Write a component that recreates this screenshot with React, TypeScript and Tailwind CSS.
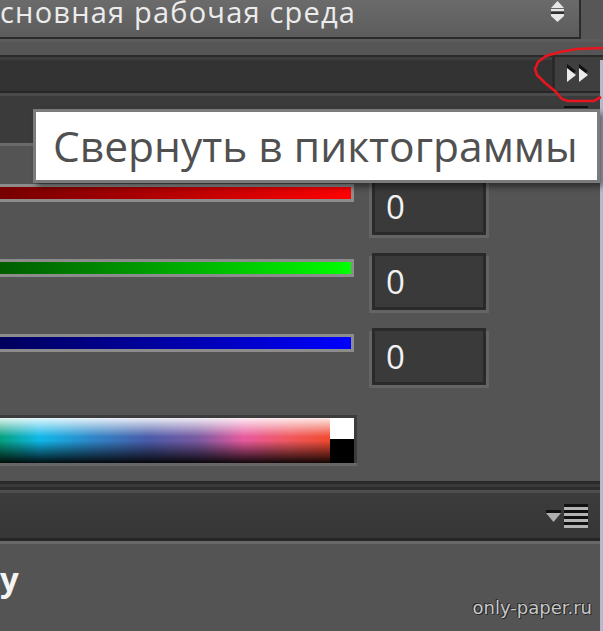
import React from "react"

const ui = { fontFamily: '"Open Sans", "Noto Sans", sans-serif' }

function Channel({ bar }: { bar: string }) {
  return (
    <div className="flex items-start">
      <div className={`mt-[6px] h-[18px] w-[354px] border-y-[3px] border-r-[3px] border-[#8c8c8c] ${bar}`} />
      <div className="ml-[18px] flex h-[57px] w-[114px] items-center border-[3px] border-[#2a2a2a] bg-[#3a3a3a] pl-[11px] shadow-[3px_3px_0_#646464,-3px_3px_0_#646464]">
        <span className="text-[33px] leading-none text-[#f2f2f2]">0</span>
      </div>
    </div>
  )
}

export default function App() {
  return (
    <div className="relative h-[631px] w-[603px] overflow-hidden bg-[#545454]" style={ui}>
      {/* workspace picker */}
      <div className="flex h-[39px]">
        <div className="flex w-[581px] items-start justify-between overflow-hidden border-r-[2px] border-b-[2px] border-[#2b2b2b] bg-gradient-to-b from-[#6b6b6b] to-[#5c5c5c]">
          <span className="-mt-[10px] whitespace-nowrap text-[29px] tracking-[1.2px] text-[#ececec]">сновная рабочая среда</span>
          <svg width="16" height="22" viewBox="0 0 16 22" className="mr-[13px]">
            <polygon points="1,8 7.5,1 14,8" fill="#e6e6e6" />
            <rect x="1" y="9" width="13" height="2" fill="#e6e6e6" />
            <rect x="1" y="12" width="13" height="2" fill="#2e2e2e" />
            <rect x="1" y="14" width="13" height="2" fill="#e6e6e6" />
            <polygon points="1,16 14,16 7.5,22" fill="#e6e6e6" />
          </svg>
        </div>
        <div className="flex-1 bg-[#575757]" />
      </div>
      <div className="h-[16px] border-t-[3px] border-[#5c5c5c] bg-[#555555]" />

      {/* panel header */}
      <div className="flex h-[38px] border-t-[2px] border-b-[2px] border-t-[#2a2a2a] border-b-[#262626] bg-[#333333] shadow-[inset_0_3px_0_#3e3e3e]">
        <div className="flex-1" />
        <div className="flex w-[51px] items-center border-l-[3px] border-[#2a2a2a] bg-[#3f3f3f] pl-[12px]">
          <svg width="22" height="20" viewBox="0 0 22 20">
            <polygon points="0,0 9,7 0,14" fill="#111111" />
            <polygon points="12,0 21,7 12,14" fill="#111111" />
            <polygon points="0,4 9,11 0,18" fill="#ececec" />
            <polygon points="12,4 21,11 12,18" fill="#ececec" />
          </svg>
        </div>
      </div>
      <div className="h-[3px] bg-[#4a4a4a]" />
      <div className="h-[47px] bg-[#3b3b3b]" />
      <div className="h-[3px] bg-[#6a6a6a]" />

      {/* colour sliders */}
      <div className="flex h-[335px] flex-col gap-[18px] pt-[32px]">
        <Channel bar="bg-gradient-to-r from-[#760000] to-[#ff0000]" />
        <Channel bar="bg-gradient-to-r from-[#005c00] to-[#00ff00]" />
        <Channel bar="bg-gradient-to-r from-[#00005c] to-[#0000ff]" />
        <div className="mt-[12px] flex h-[51px] w-[357px] flex-col">
          <div className="flex h-[48px] border-t-[3px] border-r-[3px] border-[#3c3c3c]">
            <div className="w-[330px] bg-[linear-gradient(to_bottom,rgba(255,255,255,0.88)_0%,rgba(255,255,255,0)_42%,rgba(0,0,0,0)_50%,rgba(0,0,0,0.92)_100%),linear-gradient(to_right,#06a07c_0%,#10b8ea_12%,#2f86c8_28%,#4a5ba8_45%,#7a5aa2_60%,#e85a9e_74%,#f0585c_88%,#f04a30_100%)]" />
            <div className="flex w-[24px] flex-col">
              <div className="h-[21px] bg-white" />
              <div className="flex-1 bg-black" />
            </div>
          </div>
          <div className="h-[3px] bg-[#666666]" />
        </div>
      </div>

      {/* next panel */}
      <div className="h-[3px] bg-[#2a2a2a]" />
      <div className="h-[3px] bg-[#3a3a3a]" />
      <div className="h-[3px] bg-[#2c2c2c]" />
      <div className="h-[3px] bg-[#4e4e4e]" />
      <div className="flex h-[45px] items-center justify-end bg-gradient-to-b from-[#3c3c3c] to-[#363636] pr-[15px]">
        <svg width="42" height="24" viewBox="0 0 42 24">
          <rect x="0" y="6" width="15" height="3" fill="#111111" />
          <polygon points="0,9 15,9 7.5,18" fill="#b0b0b0" />
          <rect x="18" y="0" width="24" height="3" fill="#111111" />
          <rect x="18" y="3" width="24" height="3" fill="#b4b4b4" />
          <rect x="18" y="6" width="24" height="3" fill="#111111" />
          <rect x="18" y="9" width="24" height="3" fill="#b4b4b4" />
          <rect x="18" y="12" width="24" height="3" fill="#111111" />
          <rect x="18" y="15" width="24" height="3" fill="#b4b4b4" />
          <rect x="18" y="18" width="24" height="3" fill="#111111" />
          <rect x="18" y="21" width="24" height="3" fill="#b4b4b4" />
        </svg>
      </div>
      <div className="h-[3px] bg-[#262626]" />
      <div className="h-[3px] bg-[#686868]" />
      <div className="relative h-[87px]">
        <span className="absolute left-0 top-[18px] text-[33px] font-bold leading-none text-[#f4f4f4]">y</span>
        <span
          className="absolute right-[11px] top-[55px] text-[18px] leading-none text-[#c8c8c8] [text-shadow:0_0_1px_#222,1px_1px_0_#2a2a2a,-1px_-1px_0_#2a2a2a]"
          style={{ fontFamily: '"DejaVu Sans", sans-serif' }}
        >
          only-paper.ru
        </span>
      </div>

      {/* window edge */}
      <div className="absolute right-0 top-[60px] bottom-0 w-[3px] bg-[#b2bacb]" />

      {/* tooltip */}
      <div className="absolute left-[33px] top-[109px] flex h-[74px] w-[567px] items-center border-[3px] border-[#7b7b7b] bg-white pl-[17px] shadow-[4px_4px_6px_rgba(0,0,0,0.45)]">
        <span className="whitespace-nowrap text-[42.5px] leading-none text-[#505050]">Свернуть в пиктограммы</span>
      </div>
      <div className="absolute left-[564px] top-[106px] h-[2px] w-[24px] bg-[#111111]" />

      {/* hand-drawn marker */}
      <svg className="pointer-events-none absolute left-0 top-0" width="603" height="631">
        <path
          d="M603 48 L577 49 L560 52 L546 56 L538 62 L535 69 L537 75 L545 83 L555 91 L562 99 L568 101 L594 101 L601 97"
          fill="none"
          stroke="#e8141e"
          strokeWidth="2.6"
        />
      </svg>
    </div>
  )
}
